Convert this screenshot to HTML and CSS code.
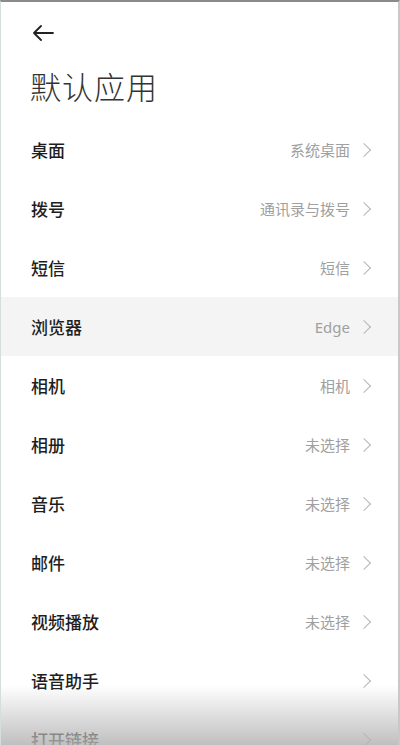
FILE: index.html
```html
<!DOCTYPE html>
<html><head>
<meta charset="utf-8">
<link rel="stylesheet" href="styles.css">
<title>默认应用</title>
</head><body>
<div class="screen">
  <div class="topbar">
    <svg class="back" width="22" height="16" viewBox="0 0 22 16"><path d="M21 8H2M9 1L2 8l7 7" fill="none" stroke="#222" stroke-width="1.8" stroke-linecap="round" stroke-linejoin="round"/></svg>
  </div>
  <h1 class="title">默认应用</h1>
  <ul class="list">
    <li class="row"><span class="label">桌面</span><span class="value">系统桌面</span><span class="chev"></span></li>
    <li class="row"><span class="label">拨号</span><span class="value">通讯录与拨号</span><span class="chev"></span></li>
    <li class="row"><span class="label">短信</span><span class="value">短信</span><span class="chev"></span></li>
    <li class="row active"><span class="label">浏览器</span><span class="value latin">Edge</span><span class="chev"></span></li>
    <li class="row"><span class="label">相机</span><span class="value">相机</span><span class="chev"></span></li>
    <li class="row"><span class="label">相册</span><span class="value">未选择</span><span class="chev"></span></li>
    <li class="row"><span class="label">音乐</span><span class="value">未选择</span><span class="chev"></span></li>
    <li class="row"><span class="label">邮件</span><span class="value">未选择</span><span class="chev"></span></li>
    <li class="row"><span class="label">视频播放</span><span class="value">未选择</span><span class="chev"></span></li>
    <li class="row"><span class="label">语音助手</span><span class="value"></span><span class="chev"></span></li>
    <li class="row"><span class="label">打开链接</span><span class="value"></span><span class="chev"></span></li>
  </ul>
  <div class="fade"></div>
</div>
</body></html>
```

FILE: styles.css
```css
html, body { margin: 0; padding: 0; background: #fff; }
body { font-family: "Noto Sans CJK SC", "Noto Sans", sans-serif; color: #222; overflow: hidden; }
.screen { position: relative; width: 400px; height: 745px; box-sizing: border-box; border-top: 2px solid #8a8a8a; border-left: 1px solid #d6dedd; border-right: 2px solid #c8c8c8; overflow: hidden; }
.topbar { height: 58px; padding: 23px 0 0 31px; box-sizing: border-box; }
.back { display: block; }
.title { margin: 0; padding: 0 0 0 29px; height: 60px; font-size: 31px; font-weight: 300; line-height: 52px; color: #333; letter-spacing: 1px; }
.list { list-style: none; margin: 0; padding: 0; }
.row { display: flex; align-items: center; height: 59px; padding: 0 29px 0 30px; }
.row.active { background: #f4f4f4; }
.label { flex: 1; font-size: 17px; font-weight: 500; color: #1e1e1e; }
.value { font-size: 15px; color: #a0a0a0; margin-right: 9px; }
.value.latin { font-family: "Noto Sans", sans-serif; font-size: 15px; }
.chev { width: 9px; height: 9px; border-top: 1.4px solid #b5b5b5; border-right: 1.4px solid #b5b5b5; transform: rotate(45deg); margin-right: 0; }
.fade { position: absolute; left: 0; right: 0; bottom: 0; height: 60px; background: linear-gradient(rgba(200,200,200,0), rgba(180,180,180,0.85)); }
```
